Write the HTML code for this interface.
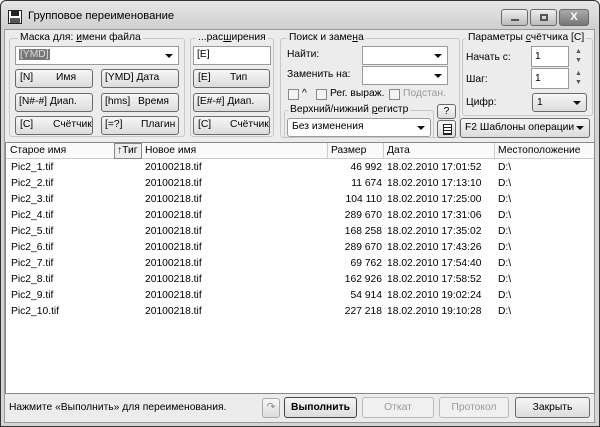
<!DOCTYPE html>
<html><head><meta charset="utf-8"><style>
*{box-sizing:border-box;margin:0;padding:0}
body{width:600px;height:427px;overflow:hidden;background:#fff;font-family:"Liberation Sans",sans-serif;font-size:10.3px;color:#000;position:relative}
.a{position:absolute;white-space:nowrap}
.win{left:0;top:0;width:600px;height:427px;background:#d4d4d4;border:1px solid #333;border-radius:6px 6px 0 0}
.body{left:4px;top:29px;width:591px;height:394px;background:#ececec;border:1px solid #999}
.grp{border:1px solid #c8c8c8;border-radius:3px}
.lbl{background:#ececec;padding:0 2px;line-height:12px}
.btn{border:1px solid #6a6a6a;border-radius:3px;background:linear-gradient(#f6f6f6,#dcdcdc);line-height:16px}
.btn span{position:absolute;top:0}
.inp{background:#fff;border:1px solid #9a9a9a;line-height:16px;padding-left:3px}
.arr{position:absolute;right:5px;top:7px;width:0;height:0;border-left:4px solid transparent;border-right:4px solid transparent;border-top:4px solid #111}
.cb{width:11px;height:11px;border:1px solid #888;background:#f4f4f4}
.row{position:absolute;left:0;width:100%;height:16px;line-height:16px}
.row span{position:absolute}
</style></head><body>
<div class="a win"></div>
<div class="a" style="left:1px;top:1px;width:598px;height:28px;background:linear-gradient(#e6e6e6,#cfcfcf);border-radius:6px 6px 0 0"></div>
<svg class="a" style="left:8px;top:10px" width="14" height="14"><rect x="0.5" y="0.5" width="13" height="13" fill="#fff" stroke="#222"/><rect x="3" y="1" width="8" height="5" fill="#222"/><rect x="2" y="8" width="10" height="5" fill="#555"/></svg>
<div class="a" style="left:28px;top:10px;font-size:11.3px">Групповое переименование</div>
<div class="a btn" style="left:501px;top:9px;width:27px;height:17px;background:linear-gradient(#eee,#bbb)"><div class="a" style="left:9px;top:9px;width:8px;height:2px;background:#555"></div></div>
<div class="a btn" style="left:530px;top:9px;width:27px;height:17px;background:linear-gradient(#eee,#bbb)"><div class="a" style="left:9px;top:4px;width:8px;height:7px;border:2px solid #555"></div></div>
<div class="a btn" style="left:559px;top:9px;width:30px;height:17px;background:linear-gradient(#aaa,#777);color:#fff;text-align:center;font-weight:bold;font-size:11px;line-height:15px">X</div>
<div class="a body"></div>

<div class="a grp" style="left:9px;top:38px;width:176px;height:99px"></div>
<div class="a lbl" style="left:18px;top:32px">Маска для: <u>и</u>мени файла</div>
<div class="a inp" style="left:15px;top:46px;width:164px;height:19px"><span style="background:#777;color:#ddd;padding:0 1px">[YMD]</span><div class="arr"></div></div>
<div class="a btn" style="left:15px;top:69px;width:78px;height:19px"><span style="left:4px">[N]</span><span style="left:40px">Имя</span></div>
<div class="a btn" style="left:101px;top:69px;width:78px;height:19px"><span style="left:3px">[YMD] Дата</span></div>
<div class="a btn" style="left:15px;top:93px;width:78px;height:19px"><span style="left:3px">[N#-#] Диап.</span></div>
<div class="a btn" style="left:101px;top:93px;width:78px;height:19px"><span style="left:3px">[hms]</span><span style="left:36px">Время</span></div>
<div class="a btn" style="left:15px;top:116px;width:78px;height:19px"><span style="left:4px">[C]</span><span style="left:37px">Счётчик</span></div>
<div class="a btn" style="left:101px;top:116px;width:78px;height:19px"><span style="left:3px">[=?]</span><span style="left:39px">Плагин</span></div>

<div class="a grp" style="left:190px;top:38px;width:84px;height:99px"></div>
<div class="a lbl" style="left:196px;top:32px">...рас<u>ш</u>ирения</div>
<div class="a inp" style="left:193px;top:46px;width:78px;height:19px">[E]</div>
<div class="a btn" style="left:193px;top:69px;width:77px;height:19px"><span style="left:4px">[E]</span><span style="left:36px">Тип</span></div>
<div class="a btn" style="left:193px;top:93px;width:77px;height:19px"><span style="left:3px">[E#-#] Диап.</span></div>
<div class="a btn" style="left:193px;top:116px;width:77px;height:19px"><span style="left:4px">[C]</span><span style="left:36px">Счётчик</span></div>

<div class="a grp" style="left:280px;top:38px;width:180px;height:100px"></div>
<div class="a lbl" style="left:287px;top:32px">Поиск и заме<u>н</u>а</div>
<div class="a" style="left:287px;top:49px">Найти:</div>
<div class="a inp" style="left:362px;top:46px;width:86px;height:19px"><div class="arr"></div></div>
<div class="a" style="left:287px;top:69px">Заменить на:</div>
<div class="a inp" style="left:362px;top:66px;width:86px;height:19px"><div class="arr"></div></div>
<div class="a cb" style="left:288px;top:89px"></div><div class="a" style="left:302px;top:88px">^</div>
<div class="a cb" style="left:316px;top:89px"></div><div class="a" style="left:330px;top:88px">Рег. выраж.</div>
<div class="a cb" style="left:389px;top:89px"></div><div class="a" style="left:403px;top:88px;color:#999">Подстан.</div>
<div class="a grp" style="left:284px;top:110px;width:150px;height:28px"></div>
<div class="a lbl" style="left:288px;top:104px">Верхний/нижний <u>р</u>егистр</div>
<div class="a inp btn" style="left:287px;top:118px;width:144px;height:19px;padding-left:4px">Без изменения<div class="arr"></div></div>
<div class="a btn" style="left:437px;top:104px;width:19px;height:15px;text-align:center;line-height:13px">?</div>
<div class="a btn" style="left:437px;top:120px;width:19px;height:18px"><div class="a" style="left:5px;top:3px;width:9px;height:11px;border:1px solid #222;background:repeating-linear-gradient(#fff 0 2px,#222 2px 3px)"></div></div>

<div class="a grp" style="left:462px;top:38px;width:131px;height:78px"></div>
<div class="a lbl" style="left:466px;top:32px">Параметры <u>с</u>чётчика [C]</div>
<div class="a" style="left:466px;top:52px">Начать с:</div>
<div class="a inp" style="left:531px;top:46px;width:38px;height:21px;line-height:19px">1</div>
<div class="a" style="left:571px;top:47px;width:15px;height:20px;color:#555;font-size:7px;line-height:9px;text-align:center">▲<br>▼</div>
<div class="a" style="left:466px;top:74px">Шаг:</div>
<div class="a inp" style="left:531px;top:68px;width:38px;height:21px;line-height:19px">1</div>
<div class="a" style="left:571px;top:69px;width:15px;height:20px;color:#555;font-size:7px;line-height:9px;text-align:center">▲<br>▼</div>
<div class="a" style="left:466px;top:97px">Цифр:</div>
<div class="a btn" style="left:532px;top:93px;width:55px;height:19px;padding-left:4px;line-height:17px">1<div class="arr"></div></div>
<div class="a btn" style="left:460px;top:118px;width:130px;height:20px;padding-left:4px;line-height:18px">F2 Шаблоны операции<div class="arr"></div></div>

<div class="a" style="left:5px;top:142px;width:590px;height:252px;background:#fff;border:1px solid #888">
 <div class="row" style="top:0;height:16px;border-bottom:1px solid #ccc;background:#fafafa">
  <span style="left:4px">Старое имя</span>
  <span style="left:108px;top:0;width:28px;height:16px;border:1px solid #888;padding-left:2px;line-height:14px;background:#eee">↑Тиг</span>
  <span style="left:139px">Новое имя</span>
  <span style="left:321px;top:0;height:16px;border-left:1px solid #ccc"></span>
  <span style="left:325px">Размер</span>
  <span style="left:377px;top:0;height:16px;border-left:1px solid #ccc"></span>
  <span style="left:381px">Дата</span>
  <span style="left:488px;top:0;height:16px;border-left:1px solid #ccc"></span>
  <span style="left:492px">Местоположение</span>
 </div>
 <div style="position:absolute;left:0;top:17px;width:100%">
  <div class="row" style="top:0"><span style="left:5px">Pic2_1.tif</span><span style="left:139px">20100218.tif</span><span style="right:212px">46 992</span><span style="left:381px">18.02.2010 17:01:52</span><span style="left:492px">D:\</span></div>
  <div class="row" style="top:16px"><span style="left:5px">Pic2_2.tif</span><span style="left:139px">20100218.tif</span><span style="right:212px">11 674</span><span style="left:381px">18.02.2010 17:13:10</span><span style="left:492px">D:\</span></div>
  <div class="row" style="top:32px"><span style="left:5px">Pic2_3.tif</span><span style="left:139px">20100218.tif</span><span style="right:212px">104 110</span><span style="left:381px">18.02.2010 17:25:00</span><span style="left:492px">D:\</span></div>
  <div class="row" style="top:48px"><span style="left:5px">Pic2_4.tif</span><span style="left:139px">20100218.tif</span><span style="right:212px">289 670</span><span style="left:381px">18.02.2010 17:31:06</span><span style="left:492px">D:\</span></div>
  <div class="row" style="top:64px"><span style="left:5px">Pic2_5.tif</span><span style="left:139px">20100218.tif</span><span style="right:212px">168 258</span><span style="left:381px">18.02.2010 17:35:02</span><span style="left:492px">D:\</span></div>
  <div class="row" style="top:80px"><span style="left:5px">Pic2_6.tif</span><span style="left:139px">20100218.tif</span><span style="right:212px">289 670</span><span style="left:381px">18.02.2010 17:43:26</span><span style="left:492px">D:\</span></div>
  <div class="row" style="top:96px"><span style="left:5px">Pic2_7.tif</span><span style="left:139px">20100218.tif</span><span style="right:212px">69 762</span><span style="left:381px">18.02.2010 17:54:40</span><span style="left:492px">D:\</span></div>
  <div class="row" style="top:112px"><span style="left:5px">Pic2_8.tif</span><span style="left:139px">20100218.tif</span><span style="right:212px">162 926</span><span style="left:381px">18.02.2010 17:58:52</span><span style="left:492px">D:\</span></div>
  <div class="row" style="top:128px"><span style="left:5px">Pic2_9.tif</span><span style="left:139px">20100218.tif</span><span style="right:212px">54 914</span><span style="left:381px">18.02.2010 19:02:24</span><span style="left:492px">D:\</span></div>
  <div class="row" style="top:144px"><span style="left:5px">Pic2_10.tif</span><span style="left:139px">20100218.tif</span><span style="right:212px">227 218</span><span style="left:381px">18.02.2010 19:10:28</span><span style="left:492px">D:\</span></div>
 </div>
</div>

<div class="a" style="left:9px;top:402px">Нажмите «Выполнить» для переименования.</div>
<div class="a btn" style="left:262px;top:398px;width:18px;height:20px;color:#888;text-align:center;line-height:18px;border-color:#aaa">↷</div>
<div class="a btn" style="left:284px;top:397px;width:73px;height:21px;font-weight:bold;text-align:center;line-height:19px;border-color:#444">Выполнить</div>
<div class="a btn" style="left:362px;top:397px;width:72px;height:21px;text-align:center;line-height:19px;color:#999;border-color:#bbb;background:#f0f0f0">Откат</div>
<div class="a btn" style="left:439px;top:397px;width:70px;height:21px;text-align:center;line-height:19px;color:#999;border-color:#bbb;background:#f0f0f0">Протокол</div>
<div class="a btn" style="left:515px;top:397px;width:75px;height:21px;text-align:center;line-height:19px">Закрыть</div>
</body></html>
